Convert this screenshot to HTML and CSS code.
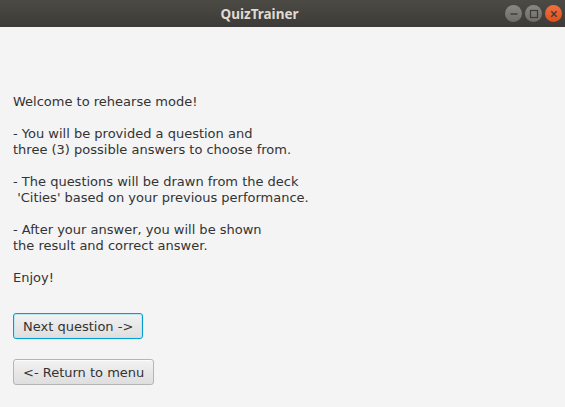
FILE: index.html
```html
<!DOCTYPE html>
<html>
<head>
<meta charset="utf-8">
<link rel="stylesheet" href="styles.css">
</head>
<body>
<div class="window">
  <header class="titlebar">
    <span class="title">QuizTrainer</span>
    <div class="controls">
      <span class="ctl ctl-min"><svg width="16" height="16" viewBox="0 0 16 16"><line x1="4.5" y1="8" x2="11.5" y2="8" stroke="#3c3b37" stroke-width="1.4"/></svg></span>
      <span class="ctl ctl-max"><svg width="16" height="16" viewBox="0 0 16 16"><rect x="4.5" y="4.5" width="7" height="7" fill="none" stroke="#3c3b37" stroke-width="1.2"/></svg></span>
      <span class="ctl ctl-close"><svg width="16" height="16" viewBox="0 0 16 16"><path d="M5.3 5.3 L10.7 10.7 M10.7 5.3 L5.3 10.7" stroke="#3c3b37" stroke-width="1.4"/></svg></span>
    </div>
  </header>
  <main class="content">
    <div class="message">
      <p>Welcome to rehearse mode!</p>
      <p>&nbsp;</p>
      <p>- You will be provided a question and</p>
      <p>three (3) possible answers to choose from.</p>
      <p>&nbsp;</p>
      <p>- The questions will be drawn from the deck</p>
      <p>&nbsp;'Cities' based on your previous performance.</p>
      <p>&nbsp;</p>
      <p>- After your answer, you will be shown</p>
      <p>the result and correct answer.</p>
      <p>&nbsp;</p>
      <p>Enjoy!</p>
    </div>
    <button class="btn btn-focused">Next question -&gt;</button>
    <button class="btn">&lt;- Return to menu</button>
  </main>
</div>
</body>
</html>
```
FILE: styles.css
```css
html, body {
  margin: 0;
  padding: 0;
  background: #f4f4f4;
}
.window {
  width: 565px;
  height: 407px;
  display: flex;
  flex-direction: column;
  overflow: hidden;
}
.titlebar {
  height: 27px;
  flex: none;
  background: linear-gradient(to bottom, #4b4a45, #3c3b37);
  display: flex;
  align-items: center;
  justify-content: center;
  position: relative;
}
.title {
  font-family: "Noto Sans", "DejaVu Sans", sans-serif;
  font-weight: bold;
  font-size: 13.5px;
  color: #dfdbd2;
  margin-right: 46px;
}
.controls {
  position: absolute;
  right: 3px;
  top: 5px;
  display: flex;
  gap: 3px;
}
.ctl {
  width: 17px;
  height: 17px;
  border-radius: 50%;
  display: flex;
  align-items: center;
  justify-content: center;
  background: linear-gradient(to bottom, #8a8883, #6f6d68);
}
.ctl-close {
  background: linear-gradient(to bottom, #f0703f, #e0501a);
}
.content {
  padding: 67px 13px 0 13px;
  display: flex;
  flex-direction: column;
  align-items: flex-start;
  font-family: "DejaVu Sans", sans-serif;
  font-size: 13px;
  color: #333333;
}
.message p {
  margin: 0;
  line-height: 16px;
  white-space: pre;
}
.btn {
  font-family: "DejaVu Sans", sans-serif;
  font-size: 13px;
  color: #333333;
  height: 26px;
  padding: 0 9px;
  margin: 0;
  border: 1px solid #b5b5b5;
  border-radius: 3px;
  background: linear-gradient(to bottom, #f2f2f2, #dedede);
  box-shadow: inset 0 1px 0 #fbfbfb;
}
.btn-focused {
  margin-top: 27px;
  border-color: #039ed3;
  box-shadow: inset 0 0 0 1px #bde6f4;
}
.btn + .btn {
  margin-top: 20px;
}
```
